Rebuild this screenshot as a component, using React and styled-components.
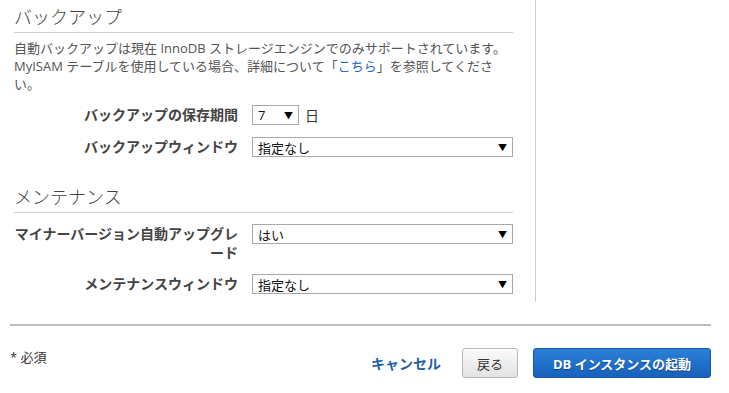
import React from 'react';
import styled, { createGlobalStyle } from 'styled-components';

const GlobalStyle = createGlobalStyle`
  body {
    margin: 0;
    background: #fff;
    font-family: "Open Sans", "Noto Sans CJK JP", sans-serif;
    color: #444;
  }
`;

const Page = styled.div`
  display: flex;
  flex-direction: column;
  width: 729px;
`;

const Main = styled.div`
  display: flex;
`;

const Column = styled.div`
  box-sizing: border-box;
  width: 536px;
  padding: 0 22px 8px 14px;
  border-right: 1px solid #d0d0d0;
`;

const SectionTitle = styled.h2`
  margin: ${(p) => (p.$first ? '0' : '23px 0 0')};
  padding: 3px 0 1px;
  line-height: 28px;
  font-size: 18px;
  font-weight: 300;
  color: #444;
  border-bottom: 1px solid #cfcfcf;
`;

const Note = styled.p`
  margin: 6px 0 0;
  font-size: 13px;
  line-height: 18px;
  color: #555;
`;

const NoteLink = styled.a`
  color: #1a6bc6;
  text-decoration: none;
`;

const Rows = styled.div`
  display: flex;
  flex-direction: column;
  gap: 12px;
  margin-top: ${(p) => p.$top}px;
`;

const Row = styled.div`
  display: grid;
  grid-template-columns: 224px 1fr;
  column-gap: 14px;
  align-items: start;
`;

const Label = styled.div`
  text-align: right;
  font-size: 14px;
  font-weight: bold;
  line-height: 19px;
  color: #444;
`;

const Control = styled.div`
  display: flex;
  align-items: center;
`;

const Select = styled.div`
  box-sizing: border-box;
  display: flex;
  align-items: center;
  justify-content: space-between;
  width: ${(p) => (p.$narrow ? '47px' : '100%')};
  height: 20px;
  padding: 0 5px;
  border: 1px solid #a9a9a9;
  background: #fff;
  font-size: 13px;
  color: #111;
`;

const Arrow = styled.span`
  font-size: 9px;
  color: #000;
`;

const Unit = styled.span`
  margin-left: 6px;
  font-size: 14px;
  color: #333;
`;

const Footer = styled.div`
  margin: 22px 18px 0 10px;
  border-top: 2px solid #bdbdbd;
  padding-top: 22px;
  display: flex;
  align-items: flex-start;
`;

const Required = styled.div`
  font-size: 13px;
  line-height: 18px;
  color: #333;
`;

const Actions = styled.div`
  margin-left: auto;
  display: flex;
  align-items: center;
`;

const CancelLink = styled.a`
  font-size: 14px;
  font-weight: bold;
  color: #1f5fa6;
  text-decoration: none;
  margin-right: 21px;
`;

const Button = styled.button`
  box-sizing: border-box;
  height: 30px;
  border-radius: 3px;
  font-family: inherit;
  font-size: 13px;
  cursor: pointer;
  ${(p) =>
    p.$primary
      ? `
    width: 178px;
    margin-left: 15px;
    border: 1px solid #1658a8;
    background: linear-gradient(#2b80d6, #1661bd);
    color: #fff;
    font-weight: bold;
    text-shadow: 0 1px 1px rgba(0, 0, 0, 0.35);
  `
      : `
    width: 56px;
    border: 1px solid #b8b8b8;
    background: linear-gradient(#fbfbfb, #e2e2e2);
    color: #333;
  `}
`;

const FormRow = ({ label, children }) => (
  <Row>
    <Label>{label}</Label>
    <Control>{children}</Control>
  </Row>
);

const Dropdown = ({ value, narrow }) => (
  <Select $narrow={narrow}>
    <span>{value}</span>
    <Arrow>▼</Arrow>
  </Select>
);

export default function App() {
  return (
    <Page>
      <GlobalStyle />
      <Main>
        <Column>
          <SectionTitle $first>バックアップ</SectionTitle>
          <Note>
            自動バックアップは現在 InnoDB ストレージエンジンでのみサポートされています。
            MyISAM テーブルを使用している場合、詳細について「<NoteLink href="#">こちら</NoteLink>」を参照してください。
          </Note>
          <Rows $top={12}>
            <FormRow label="バックアップの保存期間">
              <Dropdown value="7" narrow />
              <Unit>日</Unit>
            </FormRow>
            <FormRow label="バックアップウィンドウ">
              <Dropdown value="指定なし" />
            </FormRow>
          </Rows>

          <SectionTitle>メンテナンス</SectionTitle>
          <Rows $top={11}>
            <FormRow label="マイナーバージョン自動アップグレード">
              <Dropdown value="はい" />
            </FormRow>
            <FormRow label="メンテナンスウィンドウ">
              <Dropdown value="指定なし" />
            </FormRow>
          </Rows>
        </Column>
      </Main>
      <Footer>
        <Required>* 必須</Required>
        <Actions>
          <CancelLink href="#">キャンセル</CancelLink>
          <Button>戻る</Button>
          <Button $primary>DB インスタンスの起動</Button>
        </Actions>
      </Footer>
    </Page>
  );
}
